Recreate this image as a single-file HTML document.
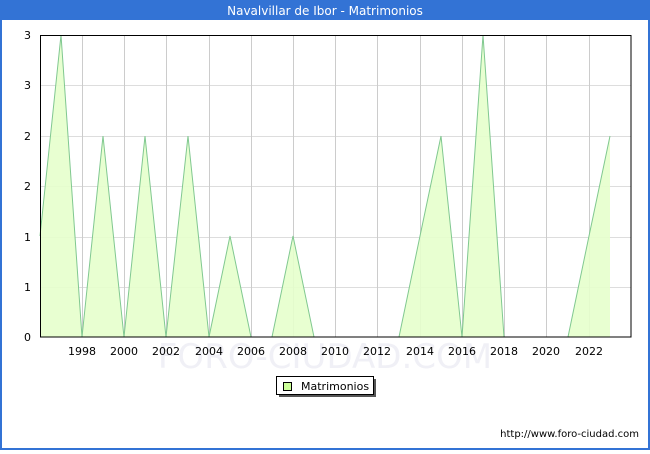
<!DOCTYPE html>
<html><head><meta charset="utf-8"><style>
html,body{margin:0;padding:0;background:#fff;}
body{width:650px;height:450px;overflow:hidden;font-family:"DejaVu Sans","Liberation Sans",sans-serif;}
</style></head><body>
<svg width="650" height="450" xmlns="http://www.w3.org/2000/svg" font-family="DejaVu Sans, Liberation Sans, sans-serif">
<rect x="0" y="0" width="650" height="450" fill="#3373d5"/>
<rect x="2" y="20" width="646" height="428" fill="#fff"/>
<text x="325" y="15" fill="#fff" font-size="12" text-anchor="middle">Navalvillar de Ibor - Matrimonios</text>
<text x="325" y="368" fill="#f0f0f6" font-size="34" text-anchor="middle">FORO-CIUDAD.COM</text>
<g stroke="#dddddd" stroke-width="1">
<line x1="40" y1="85.5" x2="631" y2="85.5"/><line x1="40" y1="136.5" x2="631" y2="136.5"/>
<line x1="40" y1="186.5" x2="631" y2="186.5"/><line x1="40" y1="237.5" x2="631" y2="237.5"/>
<line x1="40" y1="287.5" x2="631" y2="287.5"/>
</g>
<g stroke="#cccccc" stroke-width="1">
<line x1="82.5" y1="35" x2="82.5" y2="337"/><line x1="124.5" y1="35" x2="124.5" y2="337"/>
<line x1="166.5" y1="35" x2="166.5" y2="337"/><line x1="209.5" y1="35" x2="209.5" y2="337"/>
<line x1="251.5" y1="35" x2="251.5" y2="337"/><line x1="293.5" y1="35" x2="293.5" y2="337"/>
<line x1="335.5" y1="35" x2="335.5" y2="337"/><line x1="377.5" y1="35" x2="377.5" y2="337"/>
<line x1="420.5" y1="35" x2="420.5" y2="337"/><line x1="462.5" y1="35" x2="462.5" y2="337"/>
<line x1="504.5" y1="35" x2="504.5" y2="337"/><line x1="546.5" y1="35" x2="546.5" y2="337"/>
<line x1="589.5" y1="35" x2="589.5" y2="337"/>
</g>
<path d="M40,337 L40,236 L61,35 L82,337 L103,136 L124,337 L145,136 L166,337 L188,136 L209,337 L230,236 L251,337 L272,337 L293,236 L314,337 L399,337 L420,236 L441,136 L462,337 L483,35 L504,337 L568,337 L589,236 L610,136 L610,337 Z" fill="#e6ffcc" fill-opacity="0.9"/>
<path d="M40,236 L61,35 L82,337 L103,136 L124,337 L145,136 L166,337 L188,136 L209,337 L230,236 L251,337 L272,337 L293,236 L314,337 L399,337 L420,236 L441,136 L462,337 L483,35 L504,337 L568,337 L589,236 L610,136" fill="none" stroke="#80c890" stroke-width="1"/>
<rect x="40.5" y="35.5" width="590.5" height="301.5" fill="none" stroke="#000" stroke-width="1"/>
<g font-size="11" fill="#000" text-anchor="end">
<text x="31" y="39">3</text><text x="31" y="89">3</text><text x="31" y="140">2</text>
<text x="31" y="190">2</text><text x="31" y="241">1</text><text x="31" y="291">1</text><text x="31" y="341">0</text>
</g>
<g font-size="11" fill="#000" text-anchor="middle">
<text x="82" y="355">1998</text><text x="124" y="355">2000</text><text x="166" y="355">2002</text>
<text x="209" y="355">2004</text><text x="251" y="355">2006</text><text x="293" y="355">2008</text>
<text x="335" y="355">2010</text><text x="377" y="355">2012</text><text x="420" y="355">2014</text>
<text x="462" y="355">2016</text><text x="504" y="355">2018</text><text x="546" y="355">2020</text>
<text x="589" y="355">2022</text>
</g>
<rect x="279" y="379" width="97" height="18" fill="#555"/>
<rect x="276.5" y="376.5" width="97" height="18" fill="#fff" stroke="#000" stroke-width="1"/>
<rect x="283.5" y="382.5" width="8" height="8" fill="#ccff99" stroke="#000" stroke-width="1"/>
<text x="301" y="390" font-size="11" fill="#000">Matrimonios</text>
<text x="639" y="437" font-size="10" fill="#000" text-anchor="end">http://www.foro-ciudad.com</text>
</svg>
</body></html>
